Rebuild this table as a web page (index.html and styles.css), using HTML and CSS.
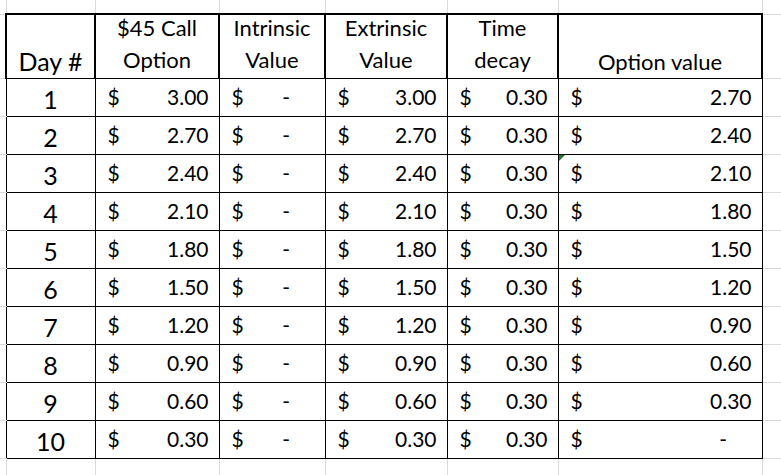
FILE: index.html
```html
<!DOCTYPE html>
<html lang="en">
<head>
<meta charset="utf-8">
<title>Option time decay</title>
<link rel="stylesheet" href="styles.css">
</head>
<body>
<table class="sheet">
  <colgroup>
    <col class="w-a"><col class="w-b"><col class="w-c"><col class="w-d"><col class="w-e"><col class="w-f"><col class="w-g"><col class="w-h">
  </colgroup>
  <tr class="row-top">
    <td class="ea"></td><td></td><td></td><td></td><td></td><td></td><td></td><td class="eh"></td>
  </tr>
  <tr class="row-head">
    <td class="ea"></td>
    <td class="hd hd-day">Day #</td>
    <td class="hd hd-wrap"><span class="l1">$45 Call</span><span class="l2">Option</span></td>
    <td class="hd hd-wrap"><span class="l1">Intrinsic</span><span class="l2">Value</span></td>
    <td class="hd hd-wrap"><span class="l1">Extrinsic</span><span class="l2">Value</span></td>
    <td class="hd hd-wrap"><span class="l1">Time</span><span class="l2">decay</span></td>
    <td class="hd hd-one">Option value</td>
    <td class="eh"></td>
  </tr>
  <tr class="row-data">
    <td class="ea"></td><td class="dc day">1</td>
    <td class="dc"><div class="acc"><span>$</span><span>3.00</span></div></td>
    <td class="dc"><div class="acc"><span>$</span><span class="dash">-</span></div></td>
    <td class="dc"><div class="acc"><span>$</span><span>3.00</span></div></td>
    <td class="dc"><div class="acc"><span>$</span><span>0.30</span></div></td>
    <td class="dc"><div class="acc"><span>$</span><span>2.70</span></div></td>
    <td class="eh"></td>
  </tr>
  <tr class="row-data">
    <td class="ea"></td><td class="dc day">2</td>
    <td class="dc"><div class="acc"><span>$</span><span>2.70</span></div></td>
    <td class="dc"><div class="acc"><span>$</span><span class="dash">-</span></div></td>
    <td class="dc"><div class="acc"><span>$</span><span>2.70</span></div></td>
    <td class="dc"><div class="acc"><span>$</span><span>0.30</span></div></td>
    <td class="dc"><div class="acc"><span>$</span><span>2.40</span></div></td>
    <td class="eh"></td>
  </tr>
  <tr class="row-data">
    <td class="ea"></td><td class="dc day">3</td>
    <td class="dc"><div class="acc"><span>$</span><span>2.40</span></div></td>
    <td class="dc"><div class="acc"><span>$</span><span class="dash">-</span></div></td>
    <td class="dc"><div class="acc"><span>$</span><span>2.40</span></div></td>
    <td class="dc"><div class="acc"><span>$</span><span>0.30</span></div></td>
    <td class="dc flagged"><span class="flag"></span><div class="acc"><span>$</span><span>2.10</span></div></td>
    <td class="eh"></td>
  </tr>
  <tr class="row-data">
    <td class="ea"></td><td class="dc day">4</td>
    <td class="dc"><div class="acc"><span>$</span><span>2.10</span></div></td>
    <td class="dc"><div class="acc"><span>$</span><span class="dash">-</span></div></td>
    <td class="dc"><div class="acc"><span>$</span><span>2.10</span></div></td>
    <td class="dc"><div class="acc"><span>$</span><span>0.30</span></div></td>
    <td class="dc"><div class="acc"><span>$</span><span>1.80</span></div></td>
    <td class="eh"></td>
  </tr>
  <tr class="row-data">
    <td class="ea"></td><td class="dc day">5</td>
    <td class="dc"><div class="acc"><span>$</span><span>1.80</span></div></td>
    <td class="dc"><div class="acc"><span>$</span><span class="dash">-</span></div></td>
    <td class="dc"><div class="acc"><span>$</span><span>1.80</span></div></td>
    <td class="dc"><div class="acc"><span>$</span><span>0.30</span></div></td>
    <td class="dc"><div class="acc"><span>$</span><span>1.50</span></div></td>
    <td class="eh"></td>
  </tr>
  <tr class="row-data">
    <td class="ea"></td><td class="dc day">6</td>
    <td class="dc"><div class="acc"><span>$</span><span>1.50</span></div></td>
    <td class="dc"><div class="acc"><span>$</span><span class="dash">-</span></div></td>
    <td class="dc"><div class="acc"><span>$</span><span>1.50</span></div></td>
    <td class="dc"><div class="acc"><span>$</span><span>0.30</span></div></td>
    <td class="dc"><div class="acc"><span>$</span><span>1.20</span></div></td>
    <td class="eh"></td>
  </tr>
  <tr class="row-data">
    <td class="ea"></td><td class="dc day">7</td>
    <td class="dc"><div class="acc"><span>$</span><span>1.20</span></div></td>
    <td class="dc"><div class="acc"><span>$</span><span class="dash">-</span></div></td>
    <td class="dc"><div class="acc"><span>$</span><span>1.20</span></div></td>
    <td class="dc"><div class="acc"><span>$</span><span>0.30</span></div></td>
    <td class="dc"><div class="acc"><span>$</span><span>0.90</span></div></td>
    <td class="eh"></td>
  </tr>
  <tr class="row-data">
    <td class="ea"></td><td class="dc day">8</td>
    <td class="dc"><div class="acc"><span>$</span><span>0.90</span></div></td>
    <td class="dc"><div class="acc"><span>$</span><span class="dash">-</span></div></td>
    <td class="dc"><div class="acc"><span>$</span><span>0.90</span></div></td>
    <td class="dc"><div class="acc"><span>$</span><span>0.30</span></div></td>
    <td class="dc"><div class="acc"><span>$</span><span>0.60</span></div></td>
    <td class="eh"></td>
  </tr>
  <tr class="row-data">
    <td class="ea"></td><td class="dc day">9</td>
    <td class="dc"><div class="acc"><span>$</span><span>0.60</span></div></td>
    <td class="dc"><div class="acc"><span>$</span><span class="dash">-</span></div></td>
    <td class="dc"><div class="acc"><span>$</span><span>0.60</span></div></td>
    <td class="dc"><div class="acc"><span>$</span><span>0.30</span></div></td>
    <td class="dc"><div class="acc"><span>$</span><span>0.30</span></div></td>
    <td class="eh"></td>
  </tr>
  <tr class="row-data">
    <td class="ea"></td><td class="dc day">10</td>
    <td class="dc"><div class="acc"><span>$</span><span>0.30</span></div></td>
    <td class="dc"><div class="acc"><span>$</span><span class="dash">-</span></div></td>
    <td class="dc"><div class="acc"><span>$</span><span>0.30</span></div></td>
    <td class="dc"><div class="acc"><span>$</span><span>0.30</span></div></td>
    <td class="dc"><div class="acc"><span>$</span><span class="dash">-</span></div></td>
    <td class="eh"></td>
  </tr>
  <tr class="row-bottom">
    <td class="ea"></td><td></td><td></td><td></td><td></td><td></td><td></td><td class="eh"></td>
  </tr>
</table>
</body>
</html>
```
FILE: styles.css
```css
html, body {
  margin: 0;
  padding: 0;
  background: #ffffff;
  overflow: hidden;
}

.sheet {
  border-collapse: collapse;
  table-layout: fixed;
  width: 781px;
  font-family: Lato, "Open Sans", sans-serif;
  font-size: 21px;
  color: #000000;
}

.w-a { width: 6px; }
.w-b { width: 89px; }
.w-c { width: 124px; }
.w-d { width: 106px; }
.w-e { width: 122px; }
.w-f { width: 111px; }
.w-g { width: 204px; }
.w-h { width: 19px; }

.sheet td {
  box-sizing: border-box;
  padding: 0;
  border-top: none;
  border-left: none;
  border-right: 1px solid #dadada;
  border-bottom: 1px solid #dadada;
  vertical-align: bottom;
  line-height: 24px;
}

.row-top td { height: 14px; }
.row-head td { height: 64px; }
.row-data td { height: 38px; }
.row-bottom td { height: 30px; }

.sheet .row-head td.ea,
.sheet .row-data td.ea { border-right: none; }

.sheet td.eh { border-right: none; }

.sheet td.hd {
  border: 2px solid #000000;
  border-bottom: 1px solid #000000;
  text-align: center;
  font-size: 22px;
}

.sheet td.hd-wrap {
  line-height: 24px;
  padding-bottom: 6px;
}

.l1,
.l2 {
  display: block;
  white-space: nowrap;
}

.l2 {
  margin-top: 7.5px;
}

.sheet td.hd-day {
  font-size: 25px;
  line-height: 30px;
  padding-bottom: 2px;
}

.sheet td.hd-one {
  padding-bottom: 4px;
}

.sheet td.dc {
  border: 1px solid #000000;
  padding-bottom: 6.5px;
}

.sheet td.day {
  font-size: 25px;
  line-height: 30px;
  text-align: center;
  padding-bottom: 2px;
}

.acc {
  display: flex;
  justify-content: space-between;
  padding: 0 10px 0 12px;
}

.dash {
  margin-right: 1.16em;
}

.flagged {
  position: relative;
}

.flag {
  position: absolute;
  left: 0;
  top: 0;
  width: 0;
  height: 0;
  border-top: 6px solid #1e7b34;
  border-right: 6px solid transparent;
}
```
